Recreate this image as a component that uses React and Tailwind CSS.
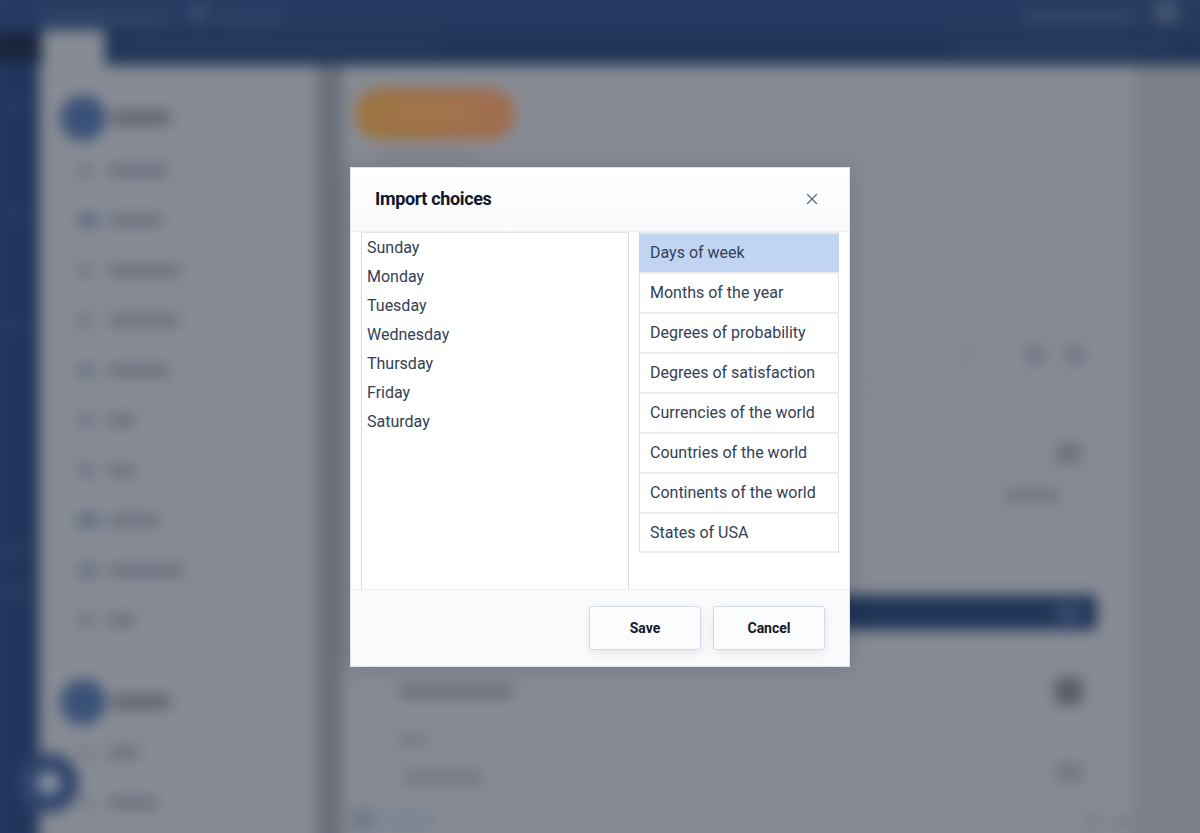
import React from "react";
import { X } from "lucide-react";

const rows1 = [
  ["w-[14px]", "bg-[#6f7484]", "w-[60px]"],
  ["w-[20px]", "bg-[#586880]", "w-[55px]"],
  ["w-[14px]", "bg-[#6f7484]", "w-[73px]"],
  ["w-[14px]", "bg-[#6f7484]", "w-[72px]"],
  ["w-[17px]", "bg-[#666f82]", "w-[62px]"],
  ["w-[17px]", "bg-[#6f7484]", "w-[27px]"],
  ["w-[17px]", "bg-[#6f7484]", "w-[27px]"],
  ["w-[20px]", "bg-[#586880]", "w-[52px]"],
  ["w-[20px]", "bg-[#666f82]", "w-[77px]"],
  ["w-[17px]", "bg-[#6f7484]", "w-[27px]"],
];

function NavRow({ icon, color, label }) {
  return (
    <div className="flex h-[50px] items-center pl-[39px] pr-[56px]">
      <div className="w-[30px] shrink-0">
        <div className={`h-[13px] rounded-sm ${icon} ${color}`} />
      </div>
      <div className="h-[11px] flex-1">
        <div className={`h-[11px] rounded-sm bg-[#696e7c] ${label}`} />
      </div>
      <div className="h-[8px] w-[6px] bg-[#7b7f8a]" />
    </div>
  );
}

function GroupHead({ mt }) {
  return (
    <div className={`flex h-[50px] items-center pl-[21px] ${mt}`}>
      <div className="h-[46px] w-[46px] rounded-full bg-[#3b5278]" />
      <div className="ml-[6px] h-[14px] w-[58px] rounded-sm bg-[#60646e]" />
    </div>
  );
}

function Backdrop() {
  return (
    <div className="absolute -inset-[12px] flex flex-col bg-[#878b94] blur-[7px]">
      <div className="flex h-[42px] shrink-0 items-end bg-[#243a60] pb-[6px] pl-[12px]">
        <div className="ml-[40px] h-[14px] w-[130px] rounded-sm bg-[#2e4568]" />
        <div className="ml-[18px] h-[22px] w-[22px] rounded-full bg-[#354b6e]" />
        <div className="ml-[8px] h-[12px] w-[64px] rounded-sm bg-[#2e4568]" />
        <div className="flex-1" />
        <div className="mr-[20px] h-[14px] w-[112px] rounded-sm bg-[#324868]" />
        <div className="mr-[34px] h-[24px] w-[24px] rounded-md bg-[#46566f]" />
      </div>
      <div className="flex min-h-0 flex-1">
        <div className="flex w-[51px] shrink-0 flex-col bg-[#21355c]">
          <div className="mt-[3px] h-[27px] bg-[#1a243a]" />
          <div className="mt-[40px] ml-[12px] h-[10px] w-[24px] bg-[#263c62]" />
          <div className="mt-[100px] ml-[12px] h-[10px] w-[24px] bg-[#263c62]" />
          <div className="mt-[100px] ml-[12px] h-[10px] w-[24px] bg-[#263c62]" />
          <div className="mt-[214px] ml-[12px] h-[10px] w-[24px] bg-[#2b4065]" />
          <div className="mt-[32px] ml-[12px] h-[10px] w-[24px] bg-[#2b4065]" />
        </div>
        <div className="flex min-w-0 flex-1 flex-col">
          <div className="flex h-[35px] shrink-0 bg-[#203558]">
            <div className="ml-[3px] h-full w-[63px] rounded-t-sm bg-[#878b94]" />
            <div className="ml-[20px] mt-[10px] h-[12px] w-[310px] rounded-sm bg-[#263c5f]" />
            <div className="flex-1" />
            <div className="mr-[40px] mt-[10px] h-[12px] w-[220px] rounded-sm bg-[#273d60]" />
          </div>
          <div className="flex min-h-0 flex-1">
            <div className="w-[278px] shrink-0 bg-[#878b94] pt-[28px]">
              <GroupHead />
              <div className="mt-[2px]">
                {rows1.map((r, i) => (
                  <NavRow key={i} icon={r[0]} color={r[1]} label={r[2]} />
                ))}
              </div>
              <GroupHead mt="mt-[32px]" />
              <NavRow icon="w-[17px]" color="bg-[#7b7f8a]" label="w-[32px]" />
              <NavRow icon="w-[17px]" color="bg-[#7b7f8a]" label="w-[50px]" />
            </div>
            <div className="w-[26px] shrink-0 bg-[#6a6f7a]" />
            <div className="relative flex w-[791px] shrink-0 flex-col bg-[#878b94] pt-[23px]">
              <div className="ml-[12px] flex h-[52px] w-[160px] items-center justify-center rounded-full bg-gradient-to-r from-[#9c7440] to-[#a06c50]">
                <div className="h-[10px] w-[76px] rounded-sm bg-[#a5794e]" />
              </div>
              <div className="ml-[40px] mt-[14px] h-[9px] w-[90px] bg-[#7c808a]" />
              <div className="mt-[181px] flex items-center justify-end pr-[48px]">
                <div className="h-[18px] w-[18px] rounded bg-[#80848f]" />
                <div className="ml-[46px] h-[22px] w-[22px] rounded-full bg-[#727886]" />
                <div className="ml-[18px] h-[22px] w-[22px] rounded-full bg-[#727886]" />
              </div>
              <div className="ml-[45px] mr-[37px] mt-[22px] h-[207px] rounded-t border-x border-t-[2px] border-[#7e838f] pt-[54px]">
                <div className="flex justify-end pr-[14px]">
                  <div className="h-[20px] w-[26px] rounded-md bg-[#6d707a]" />
                </div>
                <div className="mt-[26px] flex justify-end pr-[36px]">
                  <div className="h-[11px] w-[56px] rounded-sm bg-[#6e727c]" />
                </div>
              </div>
              <div className="ml-[45px] mr-[37px] flex h-[35px] items-center justify-end rounded-md bg-[#203558] pr-[14px]">
                <div className="h-[18px] w-[28px] rounded bg-[#374a6c]" />
              </div>
              <div className="ml-[45px] mr-[37px] flex items-center justify-between pl-[10px] pr-[14px] pt-[47px]">
                <div className="h-[12px] w-[116px] rounded-sm bg-[#696c75]" />
                <div className="h-[28px] w-[28px] rounded-md bg-[#5a5d66]" />
              </div>
              <div className="ml-[55px] mt-[30px] h-[10px] w-[30px] rounded-sm bg-[#72767f]" />
              <div className="ml-[45px] mr-[37px] mt-[16px] flex items-start border-t border-[#7c808a] pl-[15px] pr-[14px] pt-[2px]">
                <div className="mt-[8px] h-[12px] w-[80px] rounded-sm bg-[#72767f]" />
                <div className="flex-1" />
                <div className="h-[18px] w-[28px] rounded bg-[#74777f]" />
              </div>
              <div className="absolute bottom-[12px] left-[8px] flex items-center">
                <div className="h-[26px] w-[26px] rounded-full bg-[#6f7a89]" />
                <div className="ml-[6px] h-[16px] w-[50px] rounded-sm bg-[#7a8491]" />
              </div>
            </div>
            <div className="flex-1 bg-[#7c7f87]" />
          </div>
        </div>
      </div>
      <div className="absolute bottom-[14px] right-[52px] flex items-center">
        <div className="h-[16px] w-[16px] rounded bg-[#787f8c]" />
        <div className="ml-[10px] h-[12px] w-[50px] rounded-sm bg-[#787f8c]" />
      </div>
      <div className="absolute bottom-[32px] left-[31px] flex h-[60px] w-[60px] items-center justify-center rounded-full bg-[#31466c]">
        <div className="h-[22px] w-[22px] rounded-full bg-[#8f97a6]" />
      </div>
    </div>
  );
}

const days = ["Sunday", "Monday", "Tuesday", "Wednesday", "Thursday", "Friday", "Saturday"];
const lists = [
  "Days of week",
  "Months of the year",
  "Degrees of probability",
  "Degrees of satisfaction",
  "Currencies of the world",
  "Countries of the world",
  "Continents of the world",
  "States of USA",
];

function Button({ children }) {
  return (
    <button className="h-[44px] w-[112px] rounded-[3px] border border-[#d3d9e6] bg-[#fbfcfe] text-[14px] font-bold text-[#111827] shadow-[0_3px_10px_rgba(15,23,42,0.08)]">
      {children}
    </button>
  );
}

export default function App() {
  return (
    <div className="relative h-[833px] w-[1200px] overflow-hidden bg-[#878b94] font-['Roboto',sans-serif]">
      <Backdrop />
      <div className="absolute inset-0 flex items-start justify-center pt-[167px]">
        <div className="flex h-[500px] w-[500px] flex-col border border-[#dfe3ea] bg-white shadow-[0_0_20px_rgba(30,35,50,0.2)]">
          <div className="flex h-[64px] shrink-0 items-center justify-between border-b border-[#f0f2f5] bg-gradient-to-b from-white to-[#f8fafc] pb-[2px] pl-[24px] pr-[28px]">
            <h2 className="text-[18px] font-bold tracking-[-0.36px] text-[#0f172a]">Import choices</h2>
            <X className="h-[18px] w-[18px] text-[#526079]" strokeWidth={1.5} />
          </div>
          <div className="flex min-h-0 flex-1 gap-[10px] px-[10px]">
            <div className="h-[358px] w-[268px] shrink-0 border border-[#dadada] border-t-[#e5e7eb] border-b-[#e5e7eb] pl-[5px]">
              {days.map((d) => (
                <div key={d} className="flex h-[29px] items-center text-[16px] text-[#334155]">
                  {d}
                </div>
              ))}
            </div>
            <div className="w-[200px] shrink-0">
              {lists.map((l, i) => (
                <div
                  key={l}
                  className={`flex items-center border-x border-t-2 px-[10px] text-[16px] text-[#334155] ${
                    i === 0
                      ? "border-[#c1d5f2] border-t-[#e5e7eb] bg-[#c1d5f2]"
                      : "border-[#e2e2e2] border-t-[#ededed] bg-white"
                  } ${i === lists.length - 1 ? "h-[41px] border-b-2 border-b-[#ededed] pt-[1px]" : "h-[40px] pb-[1px]"}`}
                >
                  {l}
                </div>
              ))}
            </div>
          </div>
          <div className="flex h-[77px] shrink-0 items-start justify-end gap-[12px] border-t border-[#eceff3] bg-[#f8fafc] pr-[24px] pt-[16px]">
            <Button>Save</Button>
            <Button>Cancel</Button>
          </div>
        </div>
      </div>
    </div>
  );
}
